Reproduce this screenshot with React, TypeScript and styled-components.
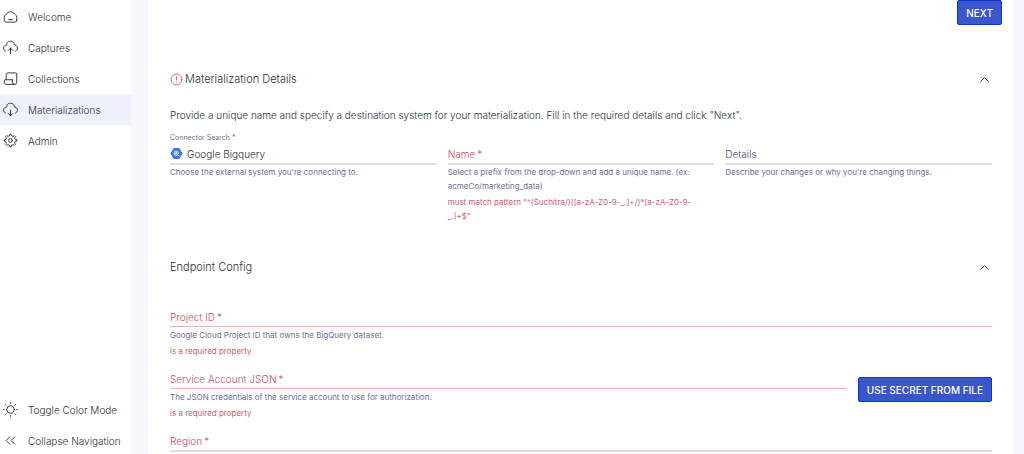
import React, { useId } from "react";
import styled, { createGlobalStyle } from "styled-components";

const color = {
  text: "#2b303b",
  muted: "#6a6f96",
  label: "#43477f",
  error: "#c64d58",
  errorText: "#cb626b",
  line: "#e0e0e0",
  errorLine: "#e9b3b7",
  page: "#f7f8fd",
  active: "#eef1fb",
  primary: "#3a56ca",
  primaryBorder: "#0c35cf",
};

const GlobalStyle = createGlobalStyle`
  *, *::before, *::after { box-sizing: border-box; }
  body {
    margin: 0;
    font-family: Inter, "Liberation Sans", sans-serif;
    font-size: 10px;
    font-weight: 300;
    color: ${color.text};
  }
  h2, p { margin: 0; font-weight: inherit; }
  button, input { font: inherit; color: inherit; }
`;

const Shell = styled.div`
  display: flex;
  height: 100vh;
  overflow: hidden;
  background: ${color.page};
`;

const Sidebar = styled.nav`
  flex: none;
  width: 131px;
  padding-top: 1px;
  display: flex;
  flex-direction: column;
  justify-content: space-between;
  background: #fff;
`;

const NavGroup = styled.div<{ $bottom?: boolean }>`
  display: flex;
  flex-direction: column;
  margin-bottom: ${(p) => (p.$bottom ? "-2px" : "0")};
`;

const NavItem = styled.a<{ $active?: boolean }>`
  display: flex;
  align-items: center;
  gap: 10px;
  height: 31px;
  padding: 0 0 0 3px;
  border: 0;
  color: inherit;
  text-align: left;
  text-decoration: none;
  white-space: nowrap;
  cursor: pointer;
  background: ${(p) => (p.$active ? color.active : "transparent")};
`;

const NavButton = styled(NavItem).attrs({ as: "button" })``;

const Glyph = styled.svg<{ $size: number }>`
  flex: none;
  width: ${(p) => p.$size}px;
  height: ${(p) => p.$size}px;
  fill: none;
  stroke: currentColor;
  stroke-width: 1.5;
  stroke-linecap: round;
  stroke-linejoin: round;
`;

const Panel = styled.main`
  flex: 1;
  min-width: 0;
  margin: 0 11px 0 17px;
  background: #fff;
`;

const Toolbar = styled.div`
  display: flex;
  justify-content: flex-end;
  padding-right: 11px;
  margin-bottom: 44px;
`;

const Button = styled.button`
  flex: none;
  height: 25px;
  padding: 0 8px;
  border: 1px solid ${color.primaryBorder};
  border-radius: 2px;
  background: ${color.primary};
  color: #fff;
  font-weight: 500;
  text-transform: uppercase;
  white-space: nowrap;
  cursor: pointer;
`;

const Section = styled.section`
  padding: 0 21px 0 22px;
  margin-bottom: 34px;
`;

const SectionHeader = styled.header`
  display: flex;
  align-items: center;
  gap: 2px;
  height: 20px;
`;

const SectionTitle = styled.h2`
  flex: 1;
  font-size: 11px;
`;

const ErrorMark = styled(Glyph)`
  color: ${color.error};
`;

const IconButton = styled.button`
  display: flex;
  padding: 0;
  border: 0;
  background: none;
  cursor: pointer;
`;

const Intro = styled.p`
  margin-top: 18px;
  line-height: 16px;
`;

const Columns = styled.div`
  display: grid;
  grid-template-columns: repeat(3, 1fr);
  gap: 11px;
  margin-top: 8px;
`;

const Stack = styled.div`
  display: flex;
  flex-direction: column;
  gap: 11px;
  margin-top: 30px;
`;

const SecretRow = styled.div`
  display: grid;
  grid-template-columns: 1fr auto;
  align-items: start;
  gap: 12px;

  > ${Button} {
    margin-top: 8px;
  }
`;

const FieldBox = styled.div`
  min-width: 0;
`;

const TopLabel = styled.label`
  display: block;
  font-size: 7px;
  font-weight: 400;
  line-height: 13px;
  color: ${color.muted};
`;

const Star = styled.span`
  margin-left: 2px;
`;

const InputLine = styled.div<{ $line: string; $thick?: boolean; $raised?: boolean }>`
  display: flex;
  align-items: center;
  gap: 4px;
  height: ${(p) => (p.$thick ? 21 : 20)}px;
  margin-top: ${(p) => (p.$raised ? 13 : 0)}px;
  margin-bottom: ${(p) => (p.$thick ? 0 : 1)}px;
  border-bottom: ${(p) => (p.$thick ? 2 : 1)}px solid ${(p) => p.$line};
`;

const InlineLabel = styled.label<{ $error?: boolean }>`
  flex: none;
  line-height: 16px;
  color: ${(p) => (p.$error ? color.error : color.label)};
`;

const TextInput = styled.input`
  flex: 1;
  min-width: 0;
  height: 18px;
  padding: 0;
  border: 0;
  outline: 0;
  background: transparent;
`;

const Helper = styled.p<{ $error?: boolean }>`
  padding-right: 16px;
  margin-top: ${(p) => (p.$error ? 2 : 0)}px;
  font-size: 8px;
  font-weight: 400;
  line-height: 14px;
  color: ${(p) => (p.$error ? color.errorText : color.muted)};
`;

function Icon({ size = 15, children }: { size?: number; children: React.ReactNode }) {
  return (
    <Glyph viewBox="0 0 24 24" $size={size} aria-hidden="true">
      {children}
    </Glyph>
  );
}

const CLOUD =
  "M20 17.6c1.5-.6 3-1.9 3-4.6 0-4-3.3-5-5-5 0-2 0-6-6-6S6 6 6 8c-1.7 0-5 1-5 5 0 2.7 1.5 4 3 4.6";

const navItems = [
  {
    label: "Welcome",
    icon: (
      <>
        <path d="M9 17h6" />
        <path d="M22 18v-4.500a6 6 0 0 0-2.500-4.900l-4.200-3.300a5.400 5.400 0 0 0-6.600 0L4.500 8.600A6 6 0 0 0 2 13.500V18a3 3 0 0 0 3 3h14a3 3 0 0 0 3-3z" />
      </>
    ),
  },
  {
    label: "Captures",
    icon: (
      <>
        <path d="M12 22v-9m0 0 3.500 3.500M12 13l-3.500 3.500" />
        <path d={CLOUD} />
      </>
    ),
  },
  {
    label: "Collections",
    icon: (
      <>
        <path d="M5 14V6a3 3 0 0 1 3-3h12a2 2 0 0 1 2 2v13a3.500 3.500 0 0 1-3.500 3.500H5.500A3.500 3.500 0 0 1 2 18v-2a2 2 0 0 1 2-2h11" />
        <path d="M18.500 21.500A3.500 3.500 0 0 1 15 18v-4" />
      </>
    ),
  },
  {
    label: "Materializations",
    active: true,
    icon: (
      <>
        <path d="M12 13v9m0 0 3.500-3.500M12 22l-3.500-3.500" />
        <path d={CLOUD} />
      </>
    ),
  },
  {
    label: "Admin",
    icon: (
      <>
        <circle cx="12" cy="12" r="3" />
        <path d="M19.600 10.400 18.500 7.700 20 6l-2-2-1.700 1.500-2.700-1.100L12.900 2H11l-.7 2.400-2.600 1.100L6 4 4 6l1.500 1.800-1.100 2.600L2 11v2l2.400.7 1.100 2.600L4 18l2 2 1.800-1.500 2.600 1.100L11 22h2l.6-2.400 2.700-1.100L18 20l2-2-1.500-1.700 1.100-2.700L22 13v-2z" />
      </>
    ),
  },
];

type FieldProps = {
  label: string;
  required?: boolean;
  helper?: string;
  error?: string;
  invalid?: boolean;
  line?: string;
  thick?: boolean;
  raised?: boolean;
};

function Field({
  label,
  required,
  helper,
  error,
  invalid,
  line = color.line,
  thick,
  raised,
}: FieldProps) {
  const id = useId();
  return (
    <FieldBox>
      <InputLine $line={line} $thick={thick} $raised={raised}>
        <InlineLabel htmlFor={id} $error={invalid}>
          {label}
          {required && <Star>*</Star>}
        </InlineLabel>
        <TextInput id={id} required={required} />
      </InputLine>
      {helper && <Helper>{helper}</Helper>}
      {error && <Helper $error>{error}</Helper>}
    </FieldBox>
  );
}

function Collapse({ label }: { label: string }) {
  return (
    <IconButton aria-label={label}>
      <Icon>
        <path d="m6 15 6-6 6 6" />
      </Icon>
    </IconButton>
  );
}

export default function App() {
  return (
    <Shell>
      <GlobalStyle />
      <Sidebar>
        <NavGroup>
          {navItems.map((item) => (
            <NavItem key={item.label} href="#" $active={item.active}>
              <Icon>{item.icon}</Icon>
              {item.label}
            </NavItem>
          ))}
        </NavGroup>
        <NavGroup $bottom>
          <NavButton>
            <Icon>
              <circle cx="12" cy="12" r="6" />
              <path d="M22 12h1M12 2V1M12 23v-1M20 20l-1-1M20 4l-1 1M4 20l1-1M4 4l1 1M1 12h1" />
            </Icon>
            Toggle Color Mode
          </NavButton>
          <NavButton>
            <Icon>
              <path d="m11 6-6 6 6 6M19 6l-6 6 6 6" />
            </Icon>
            Collapse Navigation
          </NavButton>
        </NavGroup>
      </Sidebar>

      <Panel>
        <Toolbar>
          <Button>Next</Button>
        </Toolbar>

        <Section>
          <SectionHeader>
            <ErrorMark viewBox="0 0 24 24" $size={13} aria-hidden="true">
              <circle cx="12" cy="12" r="10" />
              <path d="M12 7v6M12 17v0" />
            </ErrorMark>
            <SectionTitle>Materialization Details</SectionTitle>
            <Collapse label="Collapse materialization details" />
          </SectionHeader>
          <Intro>
            Provide a unique name and specify a destination system for your materialization. Fill in
            the required details and click "Next".
          </Intro>
          <Columns>
            <FieldBox>
              <TopLabel htmlFor="connector">
                Connector Search<Star>*</Star>
              </TopLabel>
              <InputLine $line={color.line} $thick>
                <Glyph viewBox="0 0 24 24" $size={13} aria-hidden="true">
                  <path
                    d="M7.500 3.500h9L21.500 12l-5 8.500h-9L2.500 12z"
                    fill="#3a7be8"
                    stroke="#3a7be8"
                    strokeWidth="3"
                  />
                  <circle cx="11.500" cy="11.500" r="4" stroke="#fff" />
                  <path d="M10 11v2M12 10v3M15 15l2.500 2.500" stroke="#fff" />
                </Glyph>
                <TextInput id="connector" defaultValue="Google Bigquery" />
              </InputLine>
              <Helper>Choose the external system you're connecting to.</Helper>
            </FieldBox>
            <Field
              label="Name"
              required
              invalid
              thick
              raised
              helper="Select a prefix from the drop-down and add a unique name. (ex: acmeCo/marketing_data)"
              error={'must match pattern "^(Suchitra/)([a-zA-Z0-9-_.]+/)*[a-zA-Z0-9-_.]+$"'}
            />
            <Field
              label="Details"
              thick
              raised
              helper="Describe your changes or why you're changing things."
            />
          </Columns>
        </Section>

        <Section>
          <SectionHeader>
            <SectionTitle>Endpoint Config</SectionTitle>
            <Collapse label="Collapse endpoint config" />
          </SectionHeader>
          <Stack>
            <Field
              label="Project ID"
              required
              invalid
              line={color.errorLine}
              helper="Google Cloud Project ID that owns the BigQuery dataset."
              error="is a required property"
            />
            <SecretRow>
              <Field
                label="Service Account JSON"
                required
                invalid
                line={color.errorLine}
                helper="The JSON credentials of the service account to use for authorization."
                error="is a required property"
              />
              <Button>Use secret from file</Button>
            </SecretRow>
            <Field label="Region" required invalid line="#f0d5d8" thick />
          </Stack>
        </Section>
      </Panel>
    </Shell>
  );
}
